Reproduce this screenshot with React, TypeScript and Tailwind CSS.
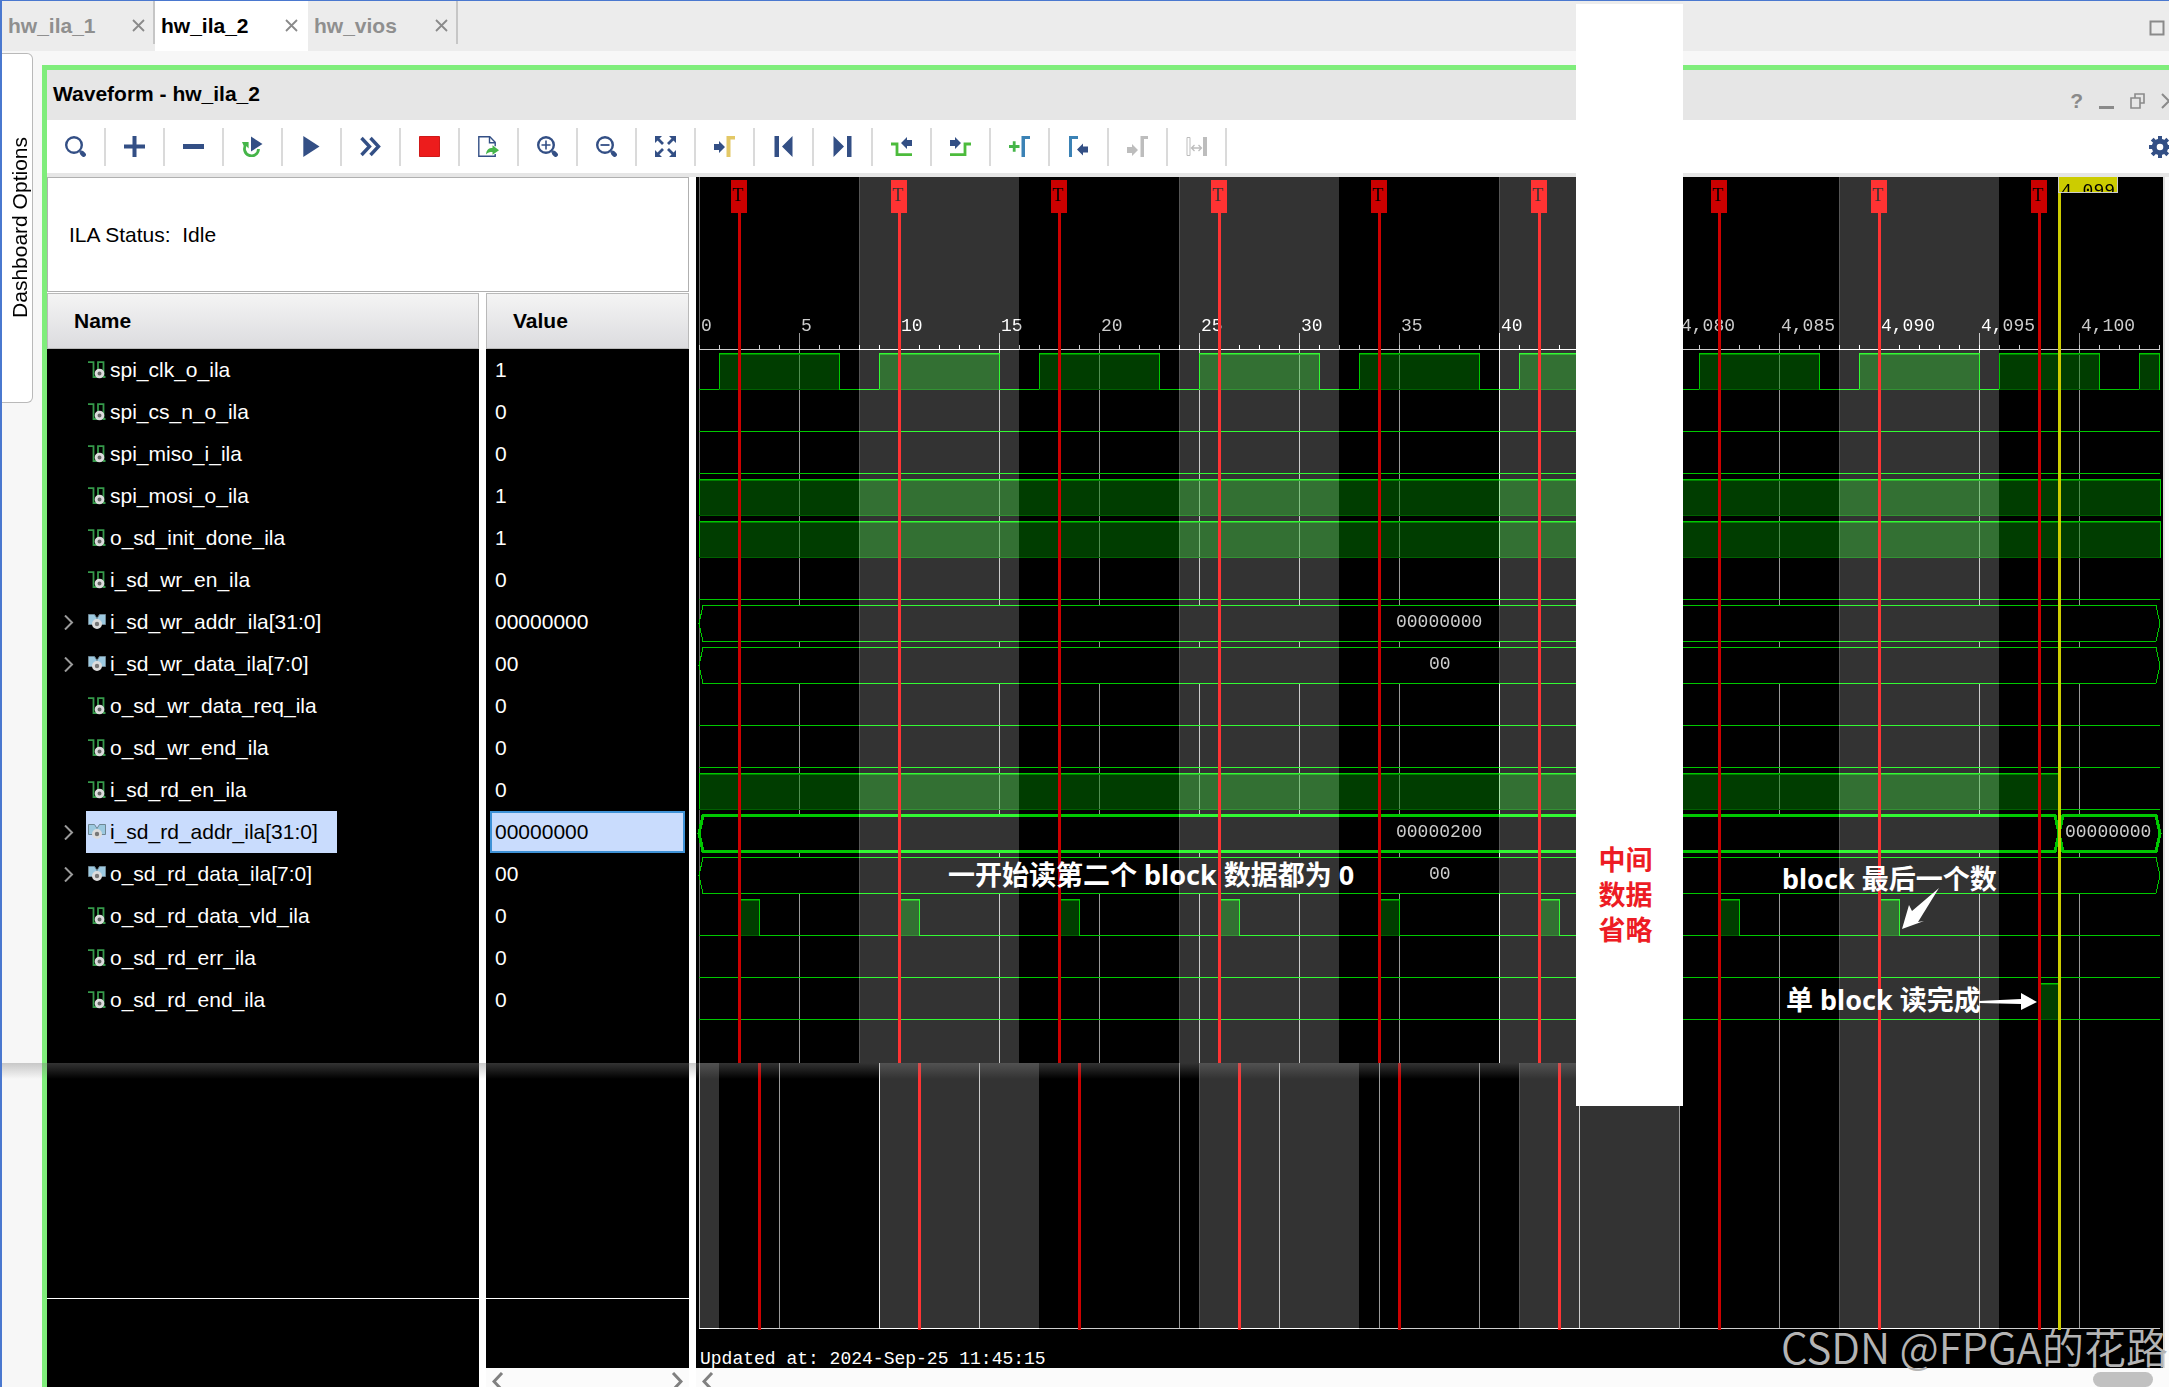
import type { ReactNode } from 'react';

type Signal = {
  name: string;
  value: string;
  bus?: boolean;
  selected?: boolean;
};

const signals: Signal[] = [
  { name: 'spi_clk_o_ila', value: '1' },
  { name: 'spi_cs_n_o_ila', value: '0' },
  { name: 'spi_miso_i_ila', value: '0' },
  { name: 'spi_mosi_o_ila', value: '1' },
  { name: 'o_sd_init_done_ila', value: '1' },
  { name: 'i_sd_wr_en_ila', value: '0' },
  { name: 'i_sd_wr_addr_ila[31:0]', value: '00000000', bus: true },
  { name: 'i_sd_wr_data_ila[7:0]', value: '00', bus: true },
  { name: 'o_sd_wr_data_req_ila', value: '0' },
  { name: 'o_sd_wr_end_ila', value: '0' },
  { name: 'i_sd_rd_en_ila', value: '0' },
  { name: 'i_sd_rd_addr_ila[31:0]', value: '00000000', bus: true, selected: true },
  { name: 'o_sd_rd_data_ila[7:0]', value: '00', bus: true },
  { name: 'o_sd_rd_data_vld_ila', value: '0' },
  { name: 'o_sd_rd_err_ila', value: '0' },
  { name: 'o_sd_rd_end_ila', value: '0' }
];

const NAVY = '#334f85';
const GREEN = '#45b549';
const GRAY = '#bdbdbd';

const arrowRight = (x: number, y: number) =>
  `M${x} ${y - 3}h5v-3l6 6l-6 6v-3h-5z`;
const arrowLeft = (x: number, y: number) =>
  `M${x} ${y - 3}h-5v-3l-6 6l6 6v-3h5z`;

const Lens = ({ children }: { children?: ReactNode }) => (
  <g stroke={NAVY} fill="none">
    <circle cx="9" cy="9" r="7.8" strokeWidth="2.4" />
    <path d="M15.2 15.2L16 16" strokeWidth="3" />
    <path d="M17.3 17.3L18.6 18.6" strokeWidth="4.6" strokeLinecap="round" />
    {children}
  </g>
);

const tools: { label: string; icon: ReactNode }[] = [
  { label: 'Search', icon: <Lens /> },
  { label: 'Add', icon: <path d="M8.5 0h4v8.5H21v4h-8.5V21h-4v-8.5H0v-4h8.5z" fill={NAVY} /> },
  { label: 'Remove', icon: <path d="M0 8h21v5H0z" fill={NAVY} /> },
  {
    label: 'Restart trigger',
    icon: (
      <>
        <path d="M4 8.5A7 7 0 1 0 16.5 13" fill="none" stroke={GREEN} strokeWidth="2.8" />
        <path d="M0 6h6.6v6.4L4.3 10 2 10.6z" fill={GREEN} />
        <path d="M9 .5L20.5 8L9 15.5z" fill={NAVY} />
      </>
    )
  },
  { label: 'Run trigger', icon: <path d="M2.3 0L18.5 10.5L2.3 21z" fill={NAVY} /> },
  {
    label: 'Run immediate',
    icon: <path d="M1.5 2l8 8.5l-8 8.5M10.5 2l8 8.5l-8 8.5" fill="none" stroke={NAVY} strokeWidth="3.4" />
  },
  { label: 'Stop trigger', icon: <path d="M.5 .5h20v20h-20z" fill="#ed1c1c" stroke="#cf1919" /> },
  {
    label: 'Export data',
    icon: (
      <>
        <path d="M17.2 18v2.2H.8V.8h11l5.4 5.4v4" fill="none" stroke={NAVY} strokeWidth="1.4" />
        <path d="M11.5 1v5.8h5.6" fill="none" stroke={NAVY} strokeWidth="1.4" />
        <path d="M8 18.5c.4-4.6 2.6-6.5 6.5-6.5V9.2l6.5 5l-6.5 4.6V16c-3 0-4.8.6-6.5 2.5z" fill={GREEN} />
      </>
    )
  },
  { label: 'Zoom in', icon: <Lens><path d="M9 4.5v9M4.5 9h9" strokeWidth="1.6" /></Lens> },
  { label: 'Zoom out', icon: <Lens><path d="M4.5 9h9" strokeWidth="1.8" /></Lens> },
  {
    label: 'Zoom fit',
    icon: (
      <>
        <path d="M0 0h7L0 7zM21 0v7L14 0zM0 21v-7l7 7zM21 21h-7l7-7z" fill={NAVY} />
        <path d="M2 2l6 6M19 2l-6 6M2 19l6-6M19 19l-6-6" stroke={NAVY} strokeWidth="2.8" />
      </>
    )
  },
  {
    label: 'Go to cursor',
    icon: (
      <>
        <path d={arrowRight(0, 11)} fill={NAVY} />
        <path d="M12.5 0H21v3.5h-4.5V21h-4z" fill="#e3c866" />
      </>
    )
  },
  { label: 'Go to start', icon: <path d="M1.5 0H6v21H1.5zM19.5 0v21L9 10.5z" fill={NAVY} /> },
  { label: 'Go to end', icon: <path d="M15 0h4.5v21H15zM1.5 0v21L12 10.5z" fill={NAVY} /> },
  {
    label: 'Previous transition',
    icon: (
      <>
        <path d="M0 8h6v10.6h15" fill="none" stroke="#4cbb3c" strokeWidth="2.8" />
        <path d={arrowLeft(21, 7)} fill={NAVY} />
      </>
    )
  },
  {
    label: 'Next transition',
    icon: (
      <>
        <path d="M0 18.6h15V8h6" fill="none" stroke="#4cbb3c" strokeWidth="2.8" />
        <path d={arrowRight(0, 7)} fill={NAVY} />
      </>
    )
  },
  {
    label: 'Add marker',
    icon: (
      <>
        <path d="M0 10.5h10.5M5.2 5.2v10.6" stroke={GREEN} strokeWidth="2.8" />
        <path d="M12.5 0H21v3h-5v18h-3.5z" fill="#3b82b5" />
      </>
    )
  },
  {
    label: 'Previous marker',
    icon: (
      <>
        <path d="M1 0h9v3H4v18H1z" fill="#3b82b5" />
        <path d={arrowLeft(20, 13.5)} fill={NAVY} />
      </>
    )
  },
  {
    label: 'Next marker',
    icon: (
      <>
        <path d={arrowRight(0, 14)} fill={GRAY} />
        <path d="M13.5 0H21v3h-4v18h-3.5z" fill={GRAY} />
      </>
    )
  },
  {
    label: 'Swap cursors',
    icon: (
      <>
        <path d="M1 1.5h3v18H1z" fill="none" stroke={GRAY} />
        <path d="M17 1h4v19h-4z" fill={GRAY} />
        <path d="M6 12h9M8.5 9l-3 3l3 3M12.5 9l3 3l-3 3" fill="none" stroke={GRAY} strokeWidth="1.3" />
      </>
    )
  }
];

const CloseIcon = () => (
  <svg width="13" height="13" viewBox="0 0 13 13" aria-hidden="true">
    <path d="M1 1l11 11M12 1L1 12" stroke="#8a8a8a" strokeWidth="1.8" />
  </svg>
);

const SignalIcon = ({ bus }: { bus?: boolean }) =>
  bus ? (
    <svg width="18" height="18" viewBox="0 0 18 18" aria-hidden="true">
      <path d="M.5 1.5h6l2.5 4l2.5-4h6v10h-17z" fill="#9cc9e0" stroke="#6f8794" strokeWidth="1" />
      <circle cx="9" cy="11" r="3.6" fill="#777" stroke="#dcdcdc" strokeWidth="2.8" />
    </svg>
  ) : (
    <svg width="18" height="18" viewBox="0 0 18 18" aria-hidden="true">
      <path d="M0 1.2h5.5V16H10V1.2h5.5V16h2" fill="none" stroke="#35994a" strokeWidth="1.8" />
      <circle cx="11.5" cy="12.5" r="3.4" fill="#666" stroke="#dcdcdc" strokeWidth="2.8" />
    </svg>
  );

const tabs = [
  { label: 'hw_ila_1', className: 'flex h-[43px] w-[153px] items-center justify-between pt-1.5 pr-2.5 pl-1.5 text-[#8f8f8f] shadow-[inset_-2px_0_0_#c6c6c6]' },
  { label: 'hw_ila_2', className: 'flex h-[50px] w-[153px] items-center justify-between bg-white pr-2.5 pb-px pl-1.5 text-black' },
  { label: 'hw_vios', className: 'flex h-[43px] w-[150px] items-center justify-between pt-1.5 pr-2.5 pl-1.5 text-[#8f8f8f] shadow-[inset_-2px_0_0_#c6c6c6]' }
];

const TabBar = () => (
  <nav className="flex h-[50px] shrink-0 items-start bg-[#ececec] text-[21px] font-bold">
    {tabs.map((tab) => (
      <div key={tab.label} className={tab.className}>
        <button type="button" className="leading-6">{tab.label}</button>
        <button type="button" aria-label={`Close ${tab.label}`}><CloseIcon /></button>
      </div>
    ))}
    <button type="button" aria-label="Maximize" className="mr-1 ml-auto self-center pt-1">
      <svg width="16" height="16" viewBox="0 0 16 16">
        <path d="M1.5 1.5h13v13h-13z" fill="none" stroke="#8a8a8a" strokeWidth="2" />
      </svg>
    </button>
  </nav>
);

const TitleBar = () => (
  <header className="flex h-[50px] shrink-0 items-center bg-[#e6e6e6] pb-0.5 pl-1.5">
    <h1 className="text-[21px] leading-6 font-bold">Waveform - hw_ila_2</h1>
    <div className="-mr-2 ml-auto flex items-center gap-4 pt-3.5 text-[#8a8a8a]">
      <button type="button" aria-label="Help" className="text-[21px] leading-5 font-bold">?</button>
      <button type="button" aria-label="Minimize">
        <svg width="15" height="16" viewBox="0 0 15 16"><path d="M0 13h15v3H0z" fill="#8a8a8a" /></svg>
      </button>
      <button type="button" aria-label="Float">
        <svg width="15" height="16" viewBox="0 0 15 16">
          <path d="M5 5V1h9v9h-4M1 5h9v10H1z" fill="none" stroke="#8a8a8a" strokeWidth="1.6" />
        </svg>
      </button>
      <button type="button" aria-label="Close">
        <svg width="16" height="16" viewBox="0 0 16 16">
          <path d="M1 1l14 14M15 1L1 15" stroke="#8a8a8a" strokeWidth="2" />
        </svg>
      </button>
    </div>
  </header>
);

const Toolbar = () => (
  <div role="toolbar" className="flex h-[57px] shrink-0 items-center border-b-4 border-[#e6e6e6] bg-white">
    {tools.map((tool) => (
      <button
        key={tool.label}
        type="button"
        aria-label={tool.label}
        className="flex h-[38px] w-[59px] items-center justify-center border-r-2 border-[#dadada]"
      >
        <svg width="21" height="21" viewBox="0 0 21 21">{tool.icon}</svg>
      </button>
    ))}
    <button type="button" aria-label="Settings" className="-mr-0.5 ml-auto">
      <svg width="22" height="22" viewBox="0 0 22 22">
        <circle cx="11" cy="11" r="5.8" fill="none" stroke={NAVY} strokeWidth="5" />
        <path
          d="M11 0v5M11 17v5M0 11h5M17 11h5M3.2 3.2l3.5 3.5M15.3 15.3l3.5 3.5M18.8 3.2l-3.5 3.5M6.7 15.3l-3.5 3.5"
          stroke={NAVY}
          strokeWidth="4"
        />
      </svg>
    </button>
  </div>
);

const Chevron = ({ flip }: { flip?: boolean }) => (
  <svg width="12" height="19" viewBox="0 0 12 19" aria-hidden="true">
    <path d={flip ? 'M2 1l8 8.5l-8 8.5' : 'M10 1L2 9.5L10 18'} fill="none" stroke="#808080" strokeWidth="3" />
  </svg>
);

const SignalTable = () => (
  <table className="w-full table-fixed border-separate border-spacing-0 text-left text-[21px] leading-6">
    <colgroup>
      <col className="w-[432px]" />
      <col className="w-[7px]" />
      <col />
    </colgroup>
    <thead>
      <tr className="h-14">
        <th className="border border-[#b9b9b9] bg-linear-to-b from-[#f4f4f4] to-[#dcdcdf] pl-[26px] font-bold">Name</th>
        <td className="bg-white p-0" />
        <th className="border border-[#b9b9b9] bg-linear-to-b from-[#f4f4f4] to-[#dcdcdf] pl-[26px] font-bold">Value</th>
      </tr>
    </thead>
    <tbody className="bg-black text-white">
      {signals.map((s) => (
        <tr key={s.name} className="h-[42px]">
          <td className="p-0">
            <div className="flex items-center pl-4">
              <span className="flex w-[23px]">
                {s.bus && (
                  <button type="button" aria-label={`Expand ${s.name}`}>
                    <svg width="11" height="15" viewBox="0 0 11 15">
                      <path d="M2 .5l7 7l-7 7" fill="none" stroke="#9a9a9a" strokeWidth="2" />
                    </svg>
                  </button>
                )}
              </span>
              <span
                className={
                  s.selected
                    ? 'flex h-[42px] w-[251px] items-center gap-1 bg-[#c9dcfd] pl-0.5 text-black'
                    : 'flex h-[42px] items-center gap-1 pl-0.5'
                }
              >
                <SignalIcon bus={s.bus} />
                {s.name}
              </span>
            </div>
          </td>
          <td className="bg-white p-0" />
          <td className="px-1 py-0">
            <div
              className={
                s.selected
                  ? 'flex h-[42px] items-center border-2 border-[#3f92d6] bg-[#c9dcfd] pl-[3px] text-black'
                  : 'flex h-[42px] items-center pl-[5px]'
              }
            >
              {s.value}
            </div>
          </td>
        </tr>
      ))}
    </tbody>
  </table>
);

// ---- waveform geometry ----
const X0 = 3;
const STEP = 20;
const END_X = 1464;
const SPLIT_Y = 886;
const BOTTOM_Y = 1151;

const early = (n: number) => X0 + n * STEP;
const late = (n: number) => 983 + (n - 4080) * STEP;
// top / base line of a signal row
const hi = (row: number) => 176 + row * 42;
const lo = (row: number) => 212 + row * 42;

const LINE = '#00c800';

const Low = ({ row }: { row: number }) => (
  <rect x={X0} y={lo(row)} width={END_X - X0} height="1" fill={LINE} />
);

const High = ({ row, from, to }: { row: number; from: number; to: number }) => (
  <g>
    <rect x={from} y={lo(row)} width={to - from} height="1" fill="#000" />
    <rect x={from} y={hi(row)} width={to - from} height="37" fill="rgb(0 130 0 / 0.47)" />
    <rect x={from} y={lo(row)} width={to - from} height="1" fill="#006000" />
    <rect x={from} y={hi(row)} width={to - from} height="1" fill={LINE} />
    <rect x={from} y={hi(row) + 1} width={to - from} height="1" fill="#008000" />
    <rect x={from} y={hi(row)} width="1" height="36" fill={LINE} />
    <rect x={to} y={hi(row)} width="1" height="37" fill={LINE} />
  </g>
);

const Bus = ({ row, from, to, thick }: { row: number; from: number; to: number; thick?: boolean }) => {
  const t = hi(row) + 0.5;
  const b = lo(row) + 0.5;
  const m = (t + b) / 2;
  return (
    <path
      d={`M${from} ${m}L${from + 4} ${t}H${to - 4}L${to} ${m}L${to - 4} ${b}H${from + 4}Z`}
      fill="#000"
      stroke={LINE}
      strokeWidth={thick ? 3 : 1}
    />
  );
};

const clockEarly = [1, 9, 17, 25, 33, 41];
const clockLate = [[4081, 4087], [4089, 4095], [4096, 4101], [4103, 4104]];
const triggersEarly = [2, 10, 18, 26, 34, 42];
const triggersLate = [4082, 4090, 4098];
const triggerXs = [...triggersEarly.map(early), ...triggersLate.map(late)];
const labelsEarly = [0, 5, 10, 15, 20, 25, 30, 35, 40];
const labelsLate = [4080, 4085, 4090, 4095, 4100];
const minorTicks = [
  ...Array.from({ length: 44 }, (_, i) => early(i)),
  ...Array.from({ length: 25 }, (_, i) => late(4080 + i))
];
const bands = [
  { x: early(8), y: 0, w: 160, h: SPLIT_Y },
  { x: early(24), y: 0, w: 160, h: SPLIT_Y },
  { x: early(40), y: 0, w: 160, h: SPLIT_Y },
  { x: late(4088), y: 0, w: 160, h: BOTTOM_Y + 1 },
  { x: X0, y: SPLIT_Y, w: 20, h: 266 },
  { x: 183, y: SPLIT_Y, w: 160, h: 266 },
  { x: 503, y: SPLIT_Y, w: 160, h: 266 },
  { x: 823, y: SPLIT_Y, w: 160, h: 266 }
];
const lowerGrid = [83, 183, 283, 383, 483, 583, 683, 783, 883, 983];
const lowerTriggers = [63, 223, 383, 543, 703, 863];

const Waveform = () => (
  <svg
    width="1467"
    height="1154"
    viewBox="0 0 1467 1154"
    shapeRendering="crispEdges"
    className="isolate block max-w-none shrink-0 bg-black font-['Liberation_Mono','Noto_Sans_CJK_SC',monospace] text-[18px]"
  >
    {/* grid */}
    <rect x={X0} y="0" width="1" height={BOTTOM_Y} fill="#666" />
    {labelsEarly.slice(1).map((n) => (
      <rect key={n} x={early(n)} y="156" width="1" height={SPLIT_Y - 156} fill="#999" />
    ))}
    {labelsLate.slice(1).map((n) => (
      <rect key={n} x={late(n)} y="156" width="1" height={BOTTOM_Y - 156} fill="#999" />
    ))}
    {lowerGrid.map((x) => (
      <rect key={x} x={x} y={SPLIT_Y} width="1" height={BOTTOM_Y - SPLIT_Y} fill="#999" />
    ))}
    <rect x={X0} y={BOTTOM_Y} width={END_X - X0} height="1" fill="#ccc" />

    {/* ruler */}
    <rect x={X0} y="172" width={END_X - X0} height="1" fill="#ccc" />
    {minorTicks.map((x) => (
      <rect key={x} x={x} y="168" width="1" height="4" fill="#ccc" />
    ))}
    {labelsEarly.map((n) => (
      <text key={n} x={early(n) + 2} y="154" fill="#ccc">{n}</text>
    ))}
    {labelsLate.map((n) => (
      <text key={n} x={late(n) + 2} y="154" fill="#ccc">{n.toLocaleString('en-US')}</text>
    ))}

    {/* single bit signals */}
    {[0, 1, 2, 3, 4, 5, 8, 9, 10, 13, 14, 15].map((row) => (
      <Low key={row} row={row} />
    ))}
    {clockEarly.map((n) => (
      <High key={n} row={0} from={early(n)} to={early(n + 6)} />
    ))}
    {clockLate.map(([a, b]) => (
      <High key={a} row={0} from={late(a)} to={late(b)} />
    ))}
    <High row={3} from={X0} to={END_X} />
    <High row={4} from={X0} to={END_X} />
    <High row={10} from={X0} to={late(4099)} />
    {triggerXs.slice(0, 8).map((x) => (
      <High key={x} row={13} from={x} to={x + 20} />
    ))}
    <High row={15} from={late(4098)} to={late(4099)} />

    {/* buses */}
    <Bus row={6} from={X0} to={END_X} />
    <Bus row={7} from={X0} to={END_X} />
    <Bus row={12} from={X0} to={END_X} />
    <Bus row={11} from={X0} to={late(4099)} thick />
    <Bus row={11} from={late(4099)} to={END_X} thick />
    <text x="700" y="450" fill="#ccc">00000000</text>
    <text x="733" y="492" fill="#ccc">00</text>
    <text x="700" y="660" fill="#ccc">00000200</text>
    <text x="1369" y="660" fill="#ccc">00000000</text>
    <text x="733" y="702" fill="#ccc">00</text>

    {/* triggers */}
    {triggerXs.map((x, i) => (
      <g key={x}>
        <rect x={x - 1} y="36" width="3" height={(i < 6 ? SPLIT_Y : BOTTOM_Y + 2) - 36} fill="#c00" />
        <rect x={x - 8} y="3" width="16" height="33" fill="#c00" />
        <text x={x - 1} y="24" textAnchor="middle" fill="#000" className="font-['Liberation_Serif',serif]">T</text>
      </g>
    ))}
    {lowerTriggers.map((x) => (
      <rect key={x} x={x - 1} y={SPLIT_Y} width="3" height={BOTTOM_Y + 2 - SPLIT_Y} fill="#c00" />
    ))}

    {/* cursor */}
    <rect x={late(4099) - 1} y="0" width="3" height={BOTTOM_Y + 2} fill="#cc0" />
    <svg x={late(4099) - 1} y="0" width="60" height="16">
      <rect width="60" height="16" fill="#cc0" />
      <text x="3" y="19" fill="#000">4,099</text>
      <path d="M.5 0v15.500h59V0" fill="none" stroke="#ccc" />
    </svg>

    {/* alternating capture windows brighten whatever is below them */}
    {bands.map((b) => (
      <g key={`${b.x}-${b.y}`} className="mix-blend-plus-lighter">
        <rect x={b.x} y={b.y} width={b.w} height={b.h} fill="#333" />
        <rect x={b.x} y={b.y} width="1" height={b.h} fill="#555" />
      </g>
    ))}
  </svg>
);

const Annotations = () => (
  <div className="pointer-events-none absolute inset-0 font-['Noto_Sans','Noto_Sans_CJK_SC',sans-serif] text-[27px] leading-8 font-bold whitespace-nowrap text-white">
    <p className="absolute top-[682px] left-[252px]">一开始读第二个 block 数据都为 0</p>
    <p className="absolute top-[686px] left-[1086px]">block 最后一个数</p>
    <p className="absolute top-[807px] left-[1090px]">单 block 读完成</p>
    <svg className="absolute inset-0" width="1467" height="1154" viewBox="0 0 1467 1154">
      <path d="M1243 711l-21 34l6-1l-22 8l7-24l3 6z" fill="#fff" />
      <path d="M1283 824l42-2v-6l16 9l-16 8v-6l-42-1z" fill="#fff" />
    </svg>
  </div>
);

const App = () => {
  return (
    <div className="relative flex h-screen flex-col overflow-hidden border-t border-l-2 border-[#4a78cf] bg-[#f7f7f7] font-['Liberation_Sans','Noto_Sans_CJK_SC',sans-serif] text-black">
      <TabBar />
      <div className="flex min-h-0 flex-1">
        <aside className="w-10 shrink-0 pt-0.5">
          <button
            type="button"
            className="flex h-[350px] w-[31px] items-center justify-center rounded-r-md border border-l-0 border-[#b9b9b9] bg-white pb-0.5 pl-1.5 text-[21px]"
          >
            <span className="rotate-180 leading-6 [writing-mode:vertical-rl]">Dashboard Options</span>
          </button>
        </aside>

        <section className="mt-3.5 flex min-w-0 flex-1 flex-col border-t-5 border-l-5 border-[#7fed7b] bg-white">
          <TitleBar />
          <Toolbar />
          <div className="flex min-h-0 flex-1">
            {/* signal list */}
            <div className="mr-[7px] flex w-[642px] shrink-0 flex-col">
              <p className="mb-px flex h-[115px] shrink-0 items-center border border-[#b0b0b0] pl-[21px] text-[21px] whitespace-pre">
                ILA Status:  Idle
              </p>
              <SignalTable />
              <div className="flex min-h-0 flex-1">
                <div className="flex w-[432px] flex-col bg-black">
                  <div className="h-[278px] shrink-0 border-b border-white" />
                </div>
                <div className="ml-[7px] flex flex-1 flex-col bg-black">
                  <div className="h-[278px] shrink-0 border-b border-white" />
                  <div className="mt-auto flex h-[19px] items-start justify-between bg-[#fbfbfb] px-1.5 pt-1">
                    <button type="button" aria-label="Scroll left"><Chevron /></button>
                    <button type="button" aria-label="Scroll right"><Chevron flip /></button>
                  </div>
                </div>
              </div>
            </div>

            {/* wave view */}
            <div className="flex min-w-0 flex-1 flex-col">
              <div className="flex min-h-0 flex-1">
                <div className="relative flex min-w-0 flex-1 flex-col overflow-hidden bg-black">
                  <Waveform />
                  <Annotations />
                  <p className="mt-4 pl-1 font-['Liberation_Mono','Noto_Sans_CJK_SC',monospace] text-[18px] leading-6 text-white">
                    Updated at: 2024-Sep-25 11:45:15
                  </p>
                </div>
                <div className="w-1.5 shrink-0 border-l-2 border-[#e0e0e0] bg-[#fbfbfb]" />
              </div>
              <div className="flex h-[19px] shrink-0 items-start justify-between bg-[#fbfbfb] pt-1 pr-4 pl-1.5">
                <button type="button" aria-label="Scroll left"><Chevron /></button>
                <span className="h-[15px] w-[60px] rounded-full bg-[#c1c1c1]" />
              </div>
            </div>
          </div>
        </section>
      </div>

      {/* seam shadow */}
      <div className="pointer-events-none absolute top-[1062px] left-0 h-4 w-[1574px] bg-linear-to-b from-[#808080]/40 to-transparent" />

      {/* strip that covers the omitted samples */}
      <div className="absolute top-[3px] left-[1574px] flex h-[1102px] w-[107px] items-end justify-center bg-white">
        <p className="mb-40 w-[62px] pr-2 text-center font-['Noto_Sans_CJK_SC',sans-serif] text-[27px] leading-[35px] font-bold text-[#ed1c24]">
          中间数据省略
        </p>
      </div>

      <p className="pointer-events-none absolute top-[1318px] left-[1779px] font-['Noto_Sans_CJK_SC',sans-serif] text-[42px] leading-[54px] font-[350] whitespace-nowrap text-[#b4b4b4]">
        CSDN @FPGA的花路-
      </p>
    </div>
  );
};

export default App;
